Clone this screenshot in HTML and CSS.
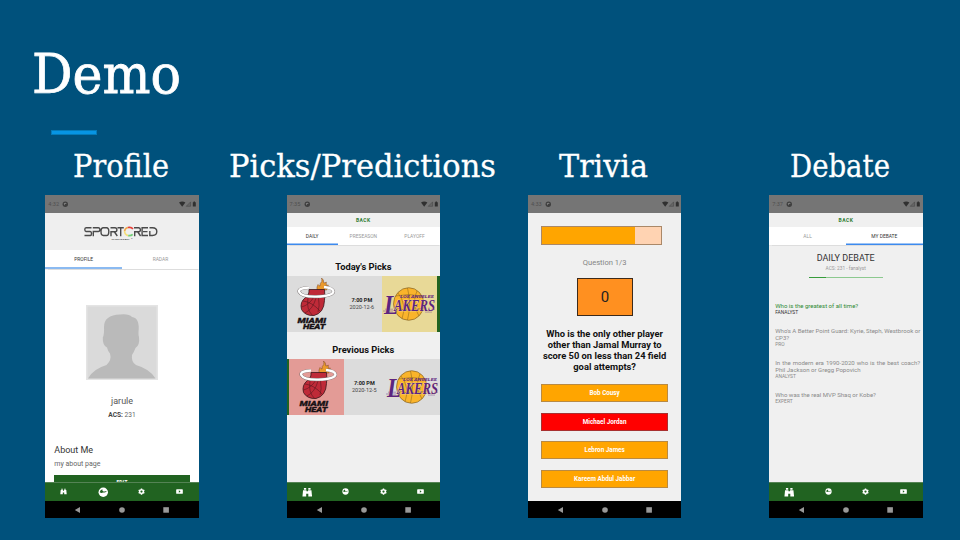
FILE: index.html
```html
<!DOCTYPE html>
<html lang="en">
<head>
<meta charset="utf-8">
<title>Demo</title>
<link rel="stylesheet" href="styles.css">
</head>
<body>
<svg class="defs" width="0" height="0">
  <symbol id="head" viewBox="0 0 153 18">
    <circle cx="20.3" cy="9.2" r="2.7" fill="#3f3f3f"/><path d="M18.7 8.700q1.500-1.800 3.100-.3l-1.800.5v1.500z" fill="#858585"/>
    <path d="M134 7.500q3.200-2 6.400 0l-3.200 4.200z" fill="#303030"/>
    <path d="M145.600 6.900v4.400h-4.400z" fill="#666" stroke="#444" stroke-width=".5"/>
    <path d="M147.800 7.200h.8v-.6h1.400v.6h.8v4.200h-3z" fill="#303030"/>
  </symbol>
  <symbol id="bino" viewBox="0 0 12 12">
    <path d="M2.200 1.200h2.600v1.800H2.200zM7.200 1.200h2.600v1.800H7.200zM1.200 3.600h3.900v1.300h1.800V3.600h3.900l.7 7.200H7.200V7.700H4.800v3.100H.5z"/>
  </symbol>
  <symbol id="ball" viewBox="0 0 12 12">
    <circle cx="6" cy="6" r="5.400"/><path d="M1.900 6Q2.500 3.300 5 2.500 4.600 4.700 6.300 5T10 4.600Q9.600 6 7.500 6.200 5.500 6 4.600 6.600T1.900 6z" fill="#216321"/>
  </symbol>
  <symbol id="gear" viewBox="0 0 12 12">
    <path fill-rule="evenodd" d="M4.900.8h2.200l.4 1.500 1.300.7 1.500-.4 1.100 1.900-1 1.100v1.200l1 1.100-1.100 1.900-1.500-.4-1.300.7-.4 1.400H4.900l-.4-1.400-1.300-.7-1.500.4L.6 7.900l1-1.100V5.600l-1-1.100 1.100-1.900 1.500.4 1.300-.7zM6 4.200a1.900 1.900 0 1 0 0 3.800 1.900 1.900 0 0 0 0-3.800z"/>
  </symbol>
  <symbol id="tube" viewBox="0 0 12 12">
    <path fill-rule="evenodd" d="M1.500 2h9q1.200 0 1.200 1.200v5.600q0 1.200-1.200 1.200h-9Q.3 10 .3 8.800V3.200Q.3 2 1.500 2zM4.900 4v4l3-2z"/>
  </symbol>
  <symbol id="keys" viewBox="0 0 153 18">
    <path d="M35 6v6L29.800 9z"/><circle cx="77" cy="9" r="2.800"/><rect x="118.300" y="6.200" width="5.600" height="5.500"/>
  </symbol>
  <symbol id="heat" viewBox="0 0 55 56">
    <path d="M30 14q-.5-3 1-5.500 1 1.500 2 1.500-.2-3 1.800-4.500.3-2-.3-3.500 2.500 1.500 2.300 5 1.500-.2 2.500-1-.3 2 .3 3.500 1-.5 1.800-.5-1.500 2-1.600 5z" fill="#eb9a2c" stroke="#7a4420" stroke-width=".5"/>
    <path d="M22 13.500h15.500q.5 5 0 11Q37 37 27 39.500 18 40 14.500 33.500 12.500 26 18.500 21.500 22.500 19 22 13.500z" fill="#bf2a38" stroke="#3a151b" stroke-width=".8"/>
    <path d="M14.500 31q8-2 13-11M18 37q8-4 11-15M25.500 39.500Q19 33 21 22M16 25q9 1 17 10M31 36q2-6 .5-14" fill="none" stroke="#5a1820" stroke-width=".6"/>
    <path d="M22 11.500Q11 12 12.200 16q2.500 5 17 4.700Q46 20 46.500 15.500 46 11.800 37 11" fill="none" stroke="#77706f" stroke-width="3.200"/>
    <path d="M22 11.500Q11 12 12.200 16q2.500 5 17 4.700Q46 20 46.500 15.500 46 11.800 37 11" fill="none" stroke="#fff" stroke-width="2.300"/>
    <g fill="#191215" stroke="#191215" stroke-width=".3" font-family="Roboto" font-weight="900" font-style="italic" font-size="7.800">
      <text x="10.500" y="47.300" textLength="28.500" lengthAdjust="spacingAndGlyphs">MIAMI</text>
      <text x="16" y="53.400" textLength="22.500" lengthAdjust="spacingAndGlyphs">HEAT</text>
    </g>
  </symbol>
  <symbol id="lakers" viewBox="0 0 55 56">
    <ellipse cx="26.700" cy="28" rx="15.200" ry="16.300" fill="#fab42b" stroke="#72531d" stroke-width=".6"/>
    <path d="M13.500 20q13-3 26.500 0M12.500 31q14 6 28 1M25.500 12q4 16 0 32M16 17q9 11 4 26M35 15q-6 12 2 25" fill="none" stroke="#80601f" stroke-width=".5"/>
    <path d="M1 35h10M3 33.200h8M43 36h7M49 33.400h4" stroke="#6e4191" stroke-width=".5"/>
    <g fill="#5c2580" stroke="#f2dfb0" stroke-width=".7" paint-order="stroke" font-family="Liberation Serif" font-weight="700" font-style="italic">
      <text x="18.300" y="22.300" font-family="Roboto" font-size="3.700" stroke-width="0" textLength="33.500" lengthAdjust="spacingAndGlyphs">LOS ANGELES</text>
      <text x="2" y="38" font-size="28" textLength="14" lengthAdjust="spacingAndGlyphs">L</text>
      <text x="12" y="35" font-size="17" textLength="41" lengthAdjust="spacingAndGlyphs">AKERS</text>
    </g>
  </symbol>
</svg>

<main class="slide">
  <h1 class="title"><svg width="156" height="62"><text x="0" y="46.500" textLength="149" lengthAdjust="spacingAndGlyphs">Demo</text></svg></h1>
  <div class="accent"></div>
  <div class="demos">
    <section class="demo">
      <h2><svg class="h-profile" width="97" height="44"><text x="0" y="30.500" textLength="96" lengthAdjust="spacingAndGlyphs">Profile</text></svg></h2>
      <div class="phone white">
        <div class="status"><svg><use href="#head"/></svg><span>4:32</span></div>
        <div class="brand">
          <svg width="76" height="18" viewBox="0 0 76 18">
            <g fill="none" stroke="#4b4b4b" stroke-width="1.400">
              <path d="M8.500 3.700H3Q1.800 3.700 1.800 5.500T3 7.500h4.200q1.300 0 1.300 2t-1.300 2H1.500M10.300 12.200V7.500h4.900q1.700 0 1.700-1.900t-1.700-1.900H9.800M20.300 3.700h3.200q2.300 0 2.300 3.900t-2.300 3.900h-3.200q-2.300 0-2.300-3.900t2.300-3.900zM28 12.200V7.800h4.200q1.700 0 1.700-2t-1.700-2.100h-4.700M31.500 8l2.800 4M34.500 3.700h6.300M37.700 3.700v8.500M51.700 12.200V7.800h4q1.700 0 1.700-2t-1.700-2.100h-4.700M54.800 8l2.800 4M65 3.700h-5.900v7.800H65M60 7.600h4.500M66.500 3.700h3q4.300 0 4.300 3.900t-4.300 3.900h-2.700V7"/>
            </g>
            <g fill="none" stroke-width="1.700"><path d="M41.600 7q.4-2.700 3.300-3.500" stroke="#f3a94f"/><path d="M44.900 3.500q3.500-.8 5 1.500" stroke="#e5413a"/><path d="M41.600 7q0 3.800 3.600 4.600" stroke="#f4df7c"/><path d="M45.200 11.600q3 .3 4.500-1.200" stroke="#72cf79"/></g>
            <text x="28.500" y="15.600" font-family="Roboto" font-weight="700" font-size="2.300" fill="#333" textLength="21">SPORTREBEL ™</text>
          </svg>
        </div>
        <div class="tabs pale"><span class="on">PROFILE</span><span>RADAR</span></div>
        <div class="profile">
          <svg class="avatar" viewBox="0 0 72 75"><rect width="72" height="75" fill="#e4e4e4"/><rect x="1.500" y="1.500" width="69" height="72" fill="#dadada"/><path d="M18 22q0-12 16-12.500 9-1 12 2.500 8 1 6.500 15-.2 3 .5 5 1 8-3.500 11-2 5-3.500 7-1 7 4 10 14 4 19.500 13.500H2q5-9.500 18.500-13.500Q26 55 24 48.500q-2-2-3-6-4.500-2-4.200-10 1.600-3 1.200-10.500z" fill="#bababa"/></svg>
          <div class="name">jarule</div>
          <div class="acs"><b>ACS:</b> 231</div>
          <div class="about">About Me</div>
          <div class="bio">my about page</div>
          <div class="edit">EDIT</div>
        </div>
        <nav class="nav"><svg class="sm"><use href="#bino"/></svg><svg class="lg"><use href="#ball"/></svg><svg class="sm"><use href="#gear"/></svg><svg class="sm"><use href="#tube"/></svg></nav>
        <div class="keys"><svg><use href="#keys"/></svg></div>
      </div>
    </section>

    <section class="demo">
      <h2><svg width="270" height="44"><text x="1" y="30.500" textLength="267" lengthAdjust="spacingAndGlyphs">Picks/Predictions</text></svg></h2>
      <div class="phone">
        <div class="status"><svg><use href="#head"/></svg><span>7:35</span></div>
        <div class="back">BACK</div>
        <div class="tabs"><span class="on">DAILY</span><span>PRESEASON</span><span>PLAYOFF</span></div>
        <div class="picks">
          <h3>Today's Picks</h3>
          <div class="game today">
            <div class="team"><svg><use href="#heat"/></svg></div>
            <div class="when"><b>7:00 PM</b>2020-12-6</div>
            <div class="team chosen"><svg><use href="#lakers"/></svg></div>
          </div>
          <h3 class="prev">Previous Picks</h3>
          <div class="game past">
            <div class="team missed"><svg><use href="#heat"/></svg></div>
            <div class="when"><b>7:00 PM</b>2020-12-5</div>
            <div class="team"><svg><use href="#lakers"/></svg></div>
          </div>
        </div>
        <nav class="nav"><svg class="lg"><use href="#bino"/></svg><svg class="sm"><use href="#ball"/></svg><svg class="sm"><use href="#gear"/></svg><svg class="sm"><use href="#tube"/></svg></nav>
        <div class="keys"><svg><use href="#keys"/></svg></div>
      </div>
    </section>

    <section class="demo">
      <h2><svg class="h-trivia" width="90" height="44"><text x="0" y="30.500" textLength="89" lengthAdjust="spacingAndGlyphs">Trivia</text></svg></h2>
      <div class="phone">
        <div class="status"><svg><use href="#head"/></svg><span>4:33</span></div>
        <div class="trivia">
          <div class="timer"><div></div></div>
          <div class="count">Question 1/3</div>
          <div class="score">0</div>
          <p>Who is the only other player<br>other than Jamal Murray to<br>score 50 on less than 24 field<br>goal attempts?</p>
          <div class="answers"><div>Bob Cousy</div><div class="wrong">Michael Jordan</div><div>Lebron James</div><div>Kareem Abdul Jabbar</div></div>
        </div>
        <div class="keys"><svg><use href="#keys"/></svg></div>
      </div>
    </section>

    <section class="demo">
      <h2><svg class="h-debate" width="102" height="44"><text x="1" y="30.500" textLength="100" lengthAdjust="spacingAndGlyphs">Debate</text></svg></h2>
      <div class="phone">
        <div class="status"><svg><use href="#head"/></svg><span>7:37</span></div>
        <div class="back">BACK</div>
        <div class="tabs"><span>ALL</span><span class="on">MY DEBATE</span></div>
        <div class="debate">
          <div class="daily">DAILY DEBATE</div>
          <div class="rank">ACS: 231 - fanalyst</div>
          <div class="level"><div></div></div>
          <div class="topics">
            <div class="topic mine"><p>Who is the greatest of all time?</p><small>FANALYST</small></div>
            <div class="topic"><p>Who's A Better Point Guard: Kyrie, Steph, Westbrook or CP3?</p><small>PRO</small></div>
            <div class="topic"><p>In the modern era 1990-2020 who is the best coach? Phil Jackson or Gregg Popovich</p><small>ANALYST</small></div>
            <div class="topic"><p>Who was the real MVP Shaq or Kobe?</p><small>EXPERT</small></div>
          </div>
        </div>
        <nav class="nav"><svg class="lg"><use href="#bino"/></svg><svg class="sm"><use href="#ball"/></svg><svg class="sm"><use href="#gear"/></svg><svg class="sm"><use href="#tube"/></svg></nav>
        <div class="keys"><svg><use href="#keys"/></svg></div>
      </div>
    </section>
  </div>
</main>
</body>
</html>
```
FILE: styles.css
```css
* { box-sizing: border-box; margin: 0; padding: 0; }
body { width: 960px; height: 540px; overflow: hidden; background: #00517c; font-family: Roboto, sans-serif; color: #555; }
svg { display: block; flex: none; }
.defs { position: absolute; }
.slide { height: 540px; padding-top: 46px; }
.title { height: 84px; padding-left: 31.500px; }
.title svg, h2 svg { overflow: visible; }
.title text, h2 text { font-family: "Roboto Slab", "DejaVu Serif", serif; font-weight: 400; fill: #fff; stroke: #fff; stroke-width: .3px; }
.title text { font-size: 54.500px; stroke-width: .8px; }
.accent { width: 46px; height: 5px; margin-left: 51px; background: #0795e3; border: 1px solid #047ab8; }
.demos { display: grid; grid-template-columns: repeat(4, 153px); column-gap: 88.300px; margin-left: 45.300px; padding-top: 11px; }
.demo { min-width: 0; }
h2 { height: 49px; display: flex; justify-content: center; }
h2 text { font-size: 32.500px; }
.h-profile { margin-right: 1px; }
.h-trivia { margin-right: 1px; }
.h-debate { margin-right: 11px; }
.phone { width: 153.500px; height: 323px; display: flex; flex-direction: column; background: #f0f0f0; overflow: hidden; }
.phone.white { background: #fff; }
.status { height: 18px; display: grid; background: #757575; flex: none; }
.status > * { grid-area: 1 / 1; }
.status svg, .keys svg { width: 153px; height: 18px; }
.status span { font-size: 5.600px; line-height: 18px; padding-left: 3px; color: #505050; }
.brand { height: 37px; background: #efefef; display: flex; justify-content: center; padding: 10.500px 2px 0 0; flex: none; }
.back { height: 14px; line-height: 14.500px; text-align: center; font-size: 5px; font-weight: 700; letter-spacing: .450px; color: #2f7c33; flex: none; }
.tabs { height: 18px; display: flex; background: #fff; box-shadow: 0 .5px 1px #ddd; flex: none; }
.tabs span { flex: 1 1 0; text-align: center; font-size: 4.900px; line-height: 18px; color: #999; }
.tabs .on { color: #333; border-bottom: 1px solid #3d8aee; box-shadow: inset 0 -.5px #3d8aee; }
.tabs.pale { height: 18.500px; }
.tabs.pale .on { border-bottom: 2px solid #8bbaf1; box-shadow: none; }
.profile { flex: 1; min-height: 0; overflow: hidden; padding: 36.500px 9px 0; }
.avatar { width: 72px; height: 75px; margin: 0 auto 0 32px; }
.name { font-size: 9px; line-height: 12px; margin-top: 15px; text-align: center; }
.acs { font-size: 6.600px; line-height: 10px; margin-top: 2.500px; text-align: center; color: #666; }
.acs b { color: #444; }
.about { font-size: 9px; line-height: 12px; margin-top: 24px; color: #333; }
.bio { font-size: 7px; line-height: 10px; margin-top: 3px; color: #666; }
.edit { background: #216321; color: #fff; height: 14px; margin-top: 6px; text-align: center; font-size: 4.800px; font-weight: 700; line-height: 15px; letter-spacing: .300px; }
.nav { height: 18.500px; margin-top: auto; background: #216321; display: flex; fill: #fff; flex: none; border-top: .5px solid #548354; padding-right: 1px; }
.nav svg { margin: auto; overflow: visible; }
.sm { width: 7px; height: 7px; }
.lg { width: 10.500px; height: 10.500px; }
.keys { height: 17.500px; background: #000; fill: #999; flex: none; margin-top: auto; }
.nav + .keys { margin-top: 0; }
.picks h3 { height: 31px; padding-top: 16px; line-height: 12px; text-align: center; font-size: 9.300px; font-weight: 700; color: #111; }
.picks .prev { height: 27px; padding-top: 12px; }
.game { display: flex; height: 56px; background: #dcdcdc; }
.team { width: 55px; flex: none; }
.team svg { width: 55px; height: 56px; }
.when { flex: 1; padding-top: 21px; text-align: center; font-size: 5.500px; line-height: 7px; color: #444; }
.when b { display: block; color: #222; }
.today .chosen { background: #e8d997; }
.today { border-right: 3px solid #216321; }
.past { border-left: 2.500px solid #216321; }
.missed { background: #e39b96; }
.trivia { padding: 13px 13px 0; }
.timer { width: 121px; height: 18.500px; background: #ffd3b2; border: 1px solid #aa8868; }
.timer div { width: 78%; height: 100%; background: #ffa500; }
.count { margin-top: 13px; text-align: center; font-size: 7.600px; line-height: 10px; color: #858585; }
.score { width: 56px; height: 38px; margin: 10.500px auto 0 36px; background: #ff9020; border: 1.500px solid #3c2a1b; text-align: center; font-size: 15px; line-height: 37px; color: #222; }
.trivia p { margin: 13px -5px 0; text-align: center; font-size: 9.350px; line-height: 10.900px; font-weight: 700; color: #111; white-space: nowrap; }
.answers { display: grid; gap: 10.600px; margin-top: 11.500px; }
.answers div { height: 18px; background: #ffa500; border: 1px solid #b98a42; color: #fff; text-align: center; font-size: 6.300px; line-height: 16.500px; font-weight: 700; }
.answers .wrong { background: #f00; border-color: #a83030; }
.debate { padding: 7px 2.500px 0 6px; }
.daily { margin-right: 4px; text-align: center; font-size: 9px; line-height: 12px; color: #333; }
.rank { margin-right: 4px; text-align: center; font-size: 4.800px; line-height: 8px; margin-top: 1px; color: #999; }
.level { width: 74px; height: 1.500px; margin: 3.500px 0 0 34px; background: #8cc98f; }
.level div { width: 23%; height: 1.500px; background: #369c3b; }
.topics { margin-top: 24px; }
.topic { margin-bottom: 10.400px; font-size: 6.050px; line-height: 7.200px; text-align: justify; color: #8a8a8a; }
.topic small { display: block; font-size: 4.900px; line-height: 7.200px; }
.mine p { color: #2f8a33; }
.mine small { color: #333; }
```
